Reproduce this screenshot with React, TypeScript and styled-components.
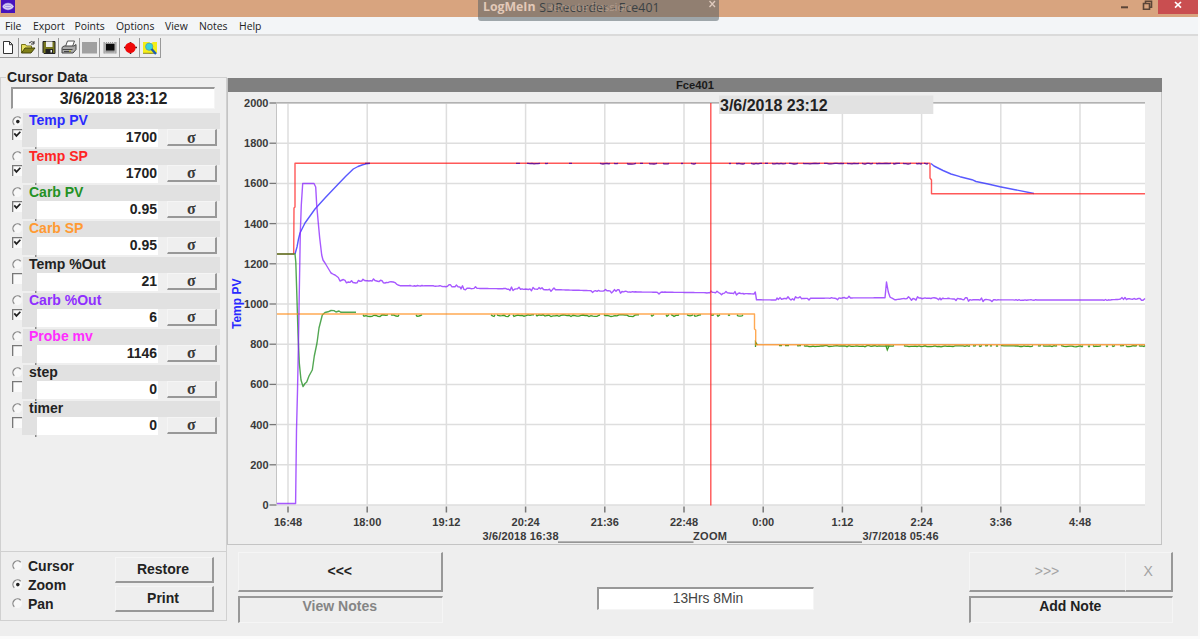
import React from 'react';
import styled, { createGlobalStyle, css } from 'styled-components';

/*
 * Data
 */

interface Channel {
  name: string;
  value: string;
  color: string;
  shown: boolean;
}

const CHANNELS: Channel[] = [
  { name: 'Temp PV', value: '1700', color: '#2a2aff', shown: true },
  { name: 'Temp SP', value: '1700', color: '#ff2424', shown: true },
  { name: 'Carb PV', value: '0.95', color: '#249124', shown: true },
  { name: 'Carb SP', value: '0.95', color: '#ff9a33', shown: true },
  { name: 'Temp %Out', value: '21', color: '#222', shown: false },
  { name: 'Carb %Out', value: '6', color: '#8f2fff', shown: true },
  { name: 'Probe mv', value: '1146', color: '#ff2cff', shown: false },
  { name: 'step', value: '0', color: '#222', shown: false },
  { name: 'timer', value: '0', color: '#222', shown: false },
];

const MENU = [
  { label: 'File', width: 28 },
  { label: 'Export', width: 41.5 },
  { label: 'Points', width: 41.5 },
  { label: 'Options', width: 49 },
  { label: 'View', width: 34 },
  { label: 'Notes', width: 40 },
  { label: 'Help', width: 30 },
];

const TIMES = ['16:48', '18:00', '19:12', '20:24', '21:36', '22:48', '0:00', '1:12', '2:24', '3:36', '4:48'];
const LEVELS = [2000, 1800, 1600, 1400, 1200, 1000, 800, 600, 400, 200, 0];

const PLOT = { left: 276.5, right: 1145, top: 103, bottom: 505 };

const timeX = (i: number) => 288 + i * 79.2;
const levelY = (v: number) => 505 - v * 0.201;

type Point = [number, number];

const TEMP_SP: Point[] = [[277, 254], [293.7, 254], [294, 208], [295, 207], [295, 163.3], [930, 163.3], [930, 178], [931.5, 180], [931.5, 193.8], [1145, 193.8]];

const TEMP_PV_RISE: Point[] = [[295, 254], [297, 247], [298.5, 239], [300, 233], [305, 223], [310, 216], [315, 209], [325, 198], [338.3, 184], [346, 176], [353.3, 169], [358, 166.5], [362, 165], [366, 163.8], [370, 163.4]];

const TEMP_PV_FALL: Point[] = [[931, 163.5], [934, 166], [943, 170.5], [951, 174], [960, 176.7], [972, 179.7], [976, 181.5], [988, 184], [1000, 186.7], [1015, 189.7], [1034, 193.5]];

const CARB_SP: Point[] = [[277, 314], [754.5, 314], [754.5, 329], [755.7, 330], [755.7, 344.8], [1145, 344.8]];

const CARB_PV: Point[] = [[277, 254], [295, 254], [295.8, 262], [297, 300], [298, 333], [299.3, 363], [301, 380], [303, 386.5], [305, 383.5], [306.7, 382], [309, 376], [312.3, 370], [314.3, 356], [317, 343], [319, 328], [322.3, 315], [325, 312.5], [328, 311.8], [331, 310.5], [334, 310.6], [336, 312], [339, 311], [341, 312.3], [356, 312.3]];

const CARB_OUT: Point[] = [[277, 503.5], [295.6, 503.5], [296.5, 430], [297.5, 391], [298.5, 340], [299, 310], [300.3, 233], [301.3, 205], [302.7, 183.5], [314, 183.5], [315.7, 187], [316.7, 205], [318.3, 223], [319.7, 238], [321.7, 255], [323, 260], [325, 263], [328, 268], [331, 273], [335, 275], [338.3, 277.5], [340, 281], [343.3, 279.5], [348.3, 282], [355.7, 283], [361.7, 281], [375, 280.5], [383.3, 282.7], [393.3, 282], [400, 285.7], [433, 285.7], [460, 287], [467, 288.3], [526, 289], [560, 289.8], [603, 291], [637, 292], [710, 292.7], [743, 293.5], [754, 294], [755.3, 292], [756.5, 299.8], [776, 300], [784, 298.5], [842, 298], [885, 297.8], [886.5, 282], [888.3, 292], [890, 297], [895, 299.8], [903, 298.6], [940, 298], [960, 299], [973, 299.8], [1037, 300], [1103, 300], [1145, 298.5]];

// x ranges where the carbon output is noisy
const OUT_NOISE: Point[] = [[343, 375], [380, 398], [410, 424], [433, 476], [503, 556], [590, 637], [655, 665], [706, 748], [776, 812], [830, 850], [903, 975], [980, 998], [1014, 1037], [1103, 1110], [1120, 1145]];

// stretches where the reading drops just under its setpoint
const CARB_DIPS_HIGH: Point[] = [[363, 388], [391, 399], [416, 422], [491, 495], [497, 510], [513, 534], [536, 600], [604, 639], [651, 654], [666, 669], [671, 679], [687, 693], [694, 701], [711, 714], [717, 720], [728, 730], [737, 743]];

const CARB_DIPS_LOW: Point[] = [[779, 782], [785, 789], [797, 801], [804, 894], [904, 970], [973, 976], [979, 982], [985, 988], [990, 992], [996, 998], [1001, 1033], [1038, 1041], [1043, 1057], [1061, 1083], [1088, 1090], [1093, 1101], [1106, 1108], [1112, 1115], [1120, 1124], [1126, 1137], [1139, 1145]];

const TEMP_DIPS: Point[] = [[516, 520], [527, 540], [545, 548], [569, 572], [600, 610], [614, 618], [627, 636], [640, 643], [649, 657], [663, 669], [681, 683], [691, 696], [729, 731], [736, 745], [751, 762], [765, 768], [772, 786], [789, 798], [803, 820], [824, 844], [847, 859], [862, 873], [876, 891], [893, 900], [903, 911], [916, 922], [924, 928]];

/*
 * Path helpers
 */

const wobble = (n: number) => {
  const s = Math.sin(n * 12.9898) * 43758.5453;
  return s - Math.floor(s);
};

const toPoints = (points: Point[]) => points.map(([x, y]) => `${x},${y.toFixed(1)}`).join(' ');

const withNoise = (points: Point[], ranges: Point[]): Point[] => {
  const out: Point[] = [];
  points.forEach(([x, y], i) => {
    out.push([x, y]);
    const next = points[i + 1];
    if (!next || next[0] - x < 4) return;
    for (let px = Math.ceil(x) + 1; px < next[0] - 1; px += 1.5) {
      const base = y + ((next[1] - y) * (px - x)) / (next[0] - x);
      if (!ranges.some(([a, b]) => px >= a && px <= b)) {
        out.push([px, base]);
        continue;
      }
      const r = wobble(px);
      out.push([px, base + (r > 0.9 ? 1.7 : r < 0.12 ? -1.7 : (r - 0.5) * 1.2)]);
    }
  });
  return out;
};

const dips = (ranges: Point[], y: number, depth: number) =>
  ranges.map(([a, b]) => {
    let d = `M${a} ${y}`;
    for (let x = a + 1; x < b; x += 2) {
      d += `L${x} ${(y + wobble(x) * depth).toFixed(1)}`;
    }
    return `${d}L${b} ${y}`;
  }).join('');

/*
 * Components
 */

const Trend: React.FC = () => (
  <TrendSvg viewBox="228 93 933 451">
    <rect x={PLOT.left} y={PLOT.top} width={PLOT.right - PLOT.left} height={PLOT.bottom - PLOT.top} fill="#fff" />

    {LEVELS.map((v) => (
      <g key={v}>
        <line x1={PLOT.left} x2={PLOT.right} y1={levelY(v)} y2={levelY(v)} stroke="#dedede" strokeWidth="1.5" />
        <line x1="269.5" x2="276.5" y1={levelY(v)} y2={levelY(v)} stroke="#777" strokeWidth="1.3" />
        <AxisText x="268.5" y={levelY(v) + 4} textAnchor="end">{v}</AxisText>
      </g>
    ))}
    {TIMES.map((t, i) => (
      <g key={t}>
        <line x1={timeX(i)} x2={timeX(i)} y1={PLOT.top} y2={PLOT.bottom} stroke="#dedede" strokeWidth="1.5" />
        <line x1={timeX(i)} x2={timeX(i)} y1="506.5" y2="512.5" stroke="#777" strokeWidth="1.5" />
        <AxisText x={timeX(i)} y="525.5" textAnchor="middle">{t}</AxisText>
      </g>
    ))}
    <line x1={PLOT.left} x2={PLOT.right} y1="102.7" y2="102.7" stroke="#b2b2b2" strokeWidth="1.5" />
    <line x1={PLOT.left} x2={PLOT.left} y1={PLOT.top} y2={PLOT.bottom} stroke="#c4c4c4" />

    <Trace points={toPoints(TEMP_PV_RISE)} stroke="#2222ff" />
    <Trace points={toPoints(TEMP_PV_FALL)} stroke="#2222ff" />
    <Trace points={toPoints(TEMP_SP)} stroke="#ff2222" />
    <path d={dips(TEMP_DIPS, 163.3, 0.8)} fill="none" stroke="#6a1595" strokeWidth="1.3" />
    <path d="M365 163.4H370" stroke="#6a1595" strokeWidth="1.3" />
    <Trace points={toPoints(CARB_PV)} stroke="#188a18" />
    <path d={dips(CARB_DIPS_HIGH, 314.8, 1.8)} fill="none" stroke="#3f9d2a" strokeWidth="1.3" />
    <path d={dips(CARB_DIPS_LOW, 345.6, 1.2)} fill="none" stroke="#3f9d2a" strokeWidth="1.3" />
    <path d="M755.5 347V342L757.5 345M886 346L887.3 350L889 346" fill="none" stroke="#3f9d2a" strokeWidth="1.3" />
    <Trace points={toPoints(CARB_SP)} stroke="#ff8c1a" />
    <Trace points={toPoints(withNoise(CARB_OUT, OUT_NOISE))} stroke="#8a22ff" />

    <line x1="710.8" x2="710.8" y1="103" y2="505.5" stroke="#ff2a2a" strokeWidth="1.4" opacity="0.8" />
    <rect x="719" y="95.5" width="214.3" height="18.5" fill="#e2e2e2" />
    <CursorText x="720" y="110.7">3/6/2018 23:12</CursorText>

    <ScaleText transform="translate(241 329) rotate(-90)">Temp PV</ScaleText>

    <AxisText x="482.5" y="539.5" textLength="76">3/6/2018 16:38</AxisText>
    <line x1="558" x2="693.5" y1="542.2" y2="542.2" stroke="#777" strokeWidth="1.3" />
    <AxisText x="693" y="539.5" textLength="34">ZOOM</AxisText>
    <line x1="727" x2="862" y1="542.2" y2="542.2" stroke="#777" strokeWidth="1.3" />
    <AxisText x="862.5" y="539.5" textLength="76">3/7/2018 05:46</AxisText>
  </TrendSvg>
);

const ToolIcons: React.ReactNode[] = [
  <path key="new" d="M3.5 3.5h6l3 3v9h-9zM9.5 3.5v3.2h3" fill="#fff" stroke="#333" />,
  <g key="open">
    <path d="M2.5 15V6.5h4l1 1.5h5v2" fill="#e8e060" stroke="#77741a" />
    <path d="M2.5 15L6 10h10l-4 5z" fill="#808018" stroke="#45450d" />
    <path d="M10 5q3-3 5 0m0-2v3h-3" fill="none" stroke="#333" />
  </g>,
  <g key="save">
    <path d="M4 3.5h12v12H5l-1-1z" fill="#767620" stroke="#222" />
    <path d="M7 3.5h6.5v5.5H7z" fill="#eee" />
    <path d="M6.5 11h7.5v4.5H6.5z" fill="#222" />
    <path d="M11.5 12h1.5v2.5h-1.5z" fill="#eee" />
  </g>,
  <g key="print">
    <path d="M6.5 8.5l2-5.5h7l-2 5.5z" fill="#fff" stroke="#555" />
    <path d="M3 9.5l2-1.5h10l2-1.5v5l-3 3.5H3z" fill="#aaa" stroke="#444" />
    <path d="M3.5 11.5h10M5 13.5h7" stroke="#444" />
    <path d="M10 13h2" stroke="#d4d440" />
  </g>,
  <path key="blank" d="M2 4h15v11.5H2z" fill="#a0a0a0" />,
  <g key="chip">
    <path d="M3.5 4h13v11.5h-13z" fill="#999" />
    <path d="M5 4.5h10V15H5z" fill="none" stroke="#e4e4e4" strokeDasharray="1 1" />
    <path d="M6 6h8.5v6.5H6z" fill="#0a0a0a" />
  </g>,
  <g key="record">
    <path d="M4 9.5h13M10.5 4v12" stroke="#4a2020" strokeWidth="1.6" />
    <circle cx="10.3" cy="9.7" r="5.3" fill="#f00808" />
  </g>,
  <g key="search">
    <path d="M3 4h6l2 1.5L13 4h4v11h-4.500l-2 1-2-1H3z" fill="#f4ee18" />
    <path d="M3 15.3h13" stroke="#8a8720" />
    <circle cx="9.200" cy="8.7" r="3.6" fill="#35d4df" stroke="#5aa8ac" />
    <path d="M11.500 11l4.500 5" stroke="#1c5cae" strokeWidth="2.400" />
  </g>,
];

const ChannelRow: React.FC<Channel & { selected: boolean }> = ({ name, value, color, shown, selected }) => (
  <Row>
    <RowHeader>
      <Radio selected={selected} />
      <RowName $color={color}>{name}</RowName>
    </RowHeader>
    <RowBody>
      <Check viewBox="0 0 11 12">
        <rect width="11" height="12" fill="#fafafa" />
        <path d="M.7 12V.7H11" fill="none" stroke="#777" strokeWidth="1.5" />
        {shown && <path d="M2.5 4.7l2.4 2.8L9.2 3" fill="none" stroke="#222" strokeWidth="1.9" />}
      </Check>
      <Gutter />
      <Value>{value}</Value>
      <Sigma>σ</Sigma>
    </RowBody>
  </Row>
);

const Radio: React.FC<{ selected?: boolean }> = ({ selected }) => (
  <RadioSvg viewBox="0 0 11 11">
    <circle cx="5.5" cy="5.5" r="4.5" fill="#f8f8f8" />
    <path d="M2.3 8.7A4.4 4.4 0 0 1 8.7 2.2" fill="none" stroke="#888" strokeWidth="1.3" />
    {selected && <circle cx="5.8" cy="5.6" r="1.8" fill="#222" />}
  </RadioSvg>
);

export default function App() {
  return (
    <Window>
      <GlobalStyle />

      <TitleBar>
        <AppIcon viewBox="0 0 14 13">
          <rect width="14" height="13" fill="#4613bd" />
          <ellipse cx="7" cy="6.5" rx="5.5" ry="3.7" fill="#a79be4" />
          <path d="M2 6.5q5-5 10 0q-5 5-10 0M4 6.5h6" fill="none" stroke="#d9d0f6" strokeWidth="1.1" />
        </AppIcon>
        <WindowTitle>SDRecorder - Fce401</WindowTitle>
        <WindowButtons>
          <svg width="34" height="14" fill="none" stroke="#5b4537">
            <path d="M2 7.3h7" strokeWidth="2" />
            <path d="M24.5 3.5h6v5.7h-6zM26.5 3V1.3h6v6h-1.7" strokeWidth="1.6" />
          </svg>
          <CloseButton>
            <svg width="10" height="10">
              <path d="M2 2l6 5.6M8 2L2 7.6" stroke="#fff" strokeWidth="1.7" />
            </svg>
          </CloseButton>
        </WindowButtons>
        <RemoteBar>
          <b>LogMeIn</b>
          <RemoteCaption>- Remote Session</RemoteCaption>
          <svg width="9" height="9">
            <path d="M1.5 1l5.5 6M7 1L1.5 7" stroke="#dfcabd" strokeWidth="1.3" />
          </svg>
        </RemoteBar>
      </TitleBar>

      <MenuBar>
        {MENU.map(({ label, width }) => (
          <MenuItem key={label} $width={width}>{label}</MenuItem>
        ))}
      </MenuBar>

      <Toolbar>
        {ToolIcons.map((icon, i) => (
          <ToolButton key={i} $first={i === 0}>
            <svg width="19" height="19" viewBox="0 0 19 19" fill="none">{icon}</svg>
          </ToolButton>
        ))}
      </Toolbar>

      <Workspace>
        <Sidebar>
          <CursorGroup>
            <Legend>Cursor Data</Legend>
            <CursorDate>3/6/2018 23:12</CursorDate>
            {CHANNELS.map((channel, i) => (
              <ChannelRow key={channel.name} {...channel} selected={i === 0} />
            ))}
          </CursorGroup>

          <ModeGroup>
            <ModeList>
              <Mode><Radio />Cursor</Mode>
              <Mode><Radio selected />Zoom</Mode>
              <Mode><Radio />Pan</Mode>
            </ModeList>
            <ModeButtons>
              <PushButton>Restore</PushButton>
              <PushButton>Print</PushButton>
            </ModeButtons>
          </ModeGroup>
        </Sidebar>

        <Main>
          <ChartPanel>
            <ChartTitle>Fce401</ChartTitle>
            <Trend />
          </ChartPanel>

          <Footer>
            <FooterColumn>
              <ScrollButton>&lt;&lt;&lt;</ScrollButton>
              <NoteButton $muted>View Notes</NoteButton>
            </FooterColumn>
            <Duration>13Hrs 8Min</Duration>
            <FooterColumn>
              <ScrollPair>
                <ScrollButton $muted $flat>&gt;&gt;&gt;</ScrollButton>
                <ScrollButton $muted>X</ScrollButton>
              </ScrollPair>
              <NoteButton>Add Note</NoteButton>
            </FooterColumn>
          </Footer>
        </Main>
      </Workspace>
    </Window>
  );
}

/*
 * Styles
 */

const GlobalStyle = createGlobalStyle`
  * {
    box-sizing: border-box;
  }

  body {
    margin: 0;
    background: #fbfbfb;
    overflow: hidden;
    font-family: "Liberation Sans", Arial, sans-serif;
    color: #222;
  }

  svg {
    display: block;
    flex: none;
  }

  button {
    font: inherit;
    color: inherit;
    padding: 0;
    border: 0;
    background: none;
  }
`;

const raised = css`
  border-right: 2px solid #989898;
  border-bottom: 2px solid #989898;
  border-top: 1px solid #f5f5f5;
  border-left: 1px solid #f5f5f5;
`;

const sunken = css`
  border-left: 2px solid #989898;
  border-top: 2px solid #989898;
  border-right: 1px solid #f5f5f5;
  border-bottom: 1px solid #f5f5f5;
`;

const Window = styled.div`
  width: 1198px;
  height: 636px;
  display: flex;
  flex-direction: column;
  background: #eee;
`;

const TitleBar = styled.div`
  position: relative;
  height: 17px;
  flex: none;
  display: flex;
  align-items: flex-start;
  justify-content: space-between;
  background: #d8a47f;
`;

const AppIcon = styled.svg`
  width: 14px;
  height: 13px;
  margin-left: 1px;
`;

const WindowTitle = styled.div`
  margin-left: 65px;
  font: 12.3px/15px "Open Sans", "Noto Sans", sans-serif;
  letter-spacing: 0.1px;
  color: #222;
`;

const WindowButtons = styled.div`
  display: flex;
  gap: 5px;
`;

const CloseButton = styled.div`
  width: 40px;
  height: 14px;
  display: flex;
  justify-content: center;
  background: #c94e50;
`;

/* Remote session strip, floats over the title and the menu bar */
const RemoteBar = styled.div`
  position: absolute;
  left: 478px;
  top: 0;
  width: 241px;
  height: 20.5px;
  padding: 0 2px 0 5px;
  display: flex;
  border-radius: 0 0 3px 3px;
  background: rgba(80, 94, 100, 0.52);
  font: 12.3px/14px "Open Sans", "Noto Sans", sans-serif;
  color: #e3c9b8;
  z-index: 1;
`;

const RemoteCaption = styled.span`
  flex: 1;
  padding-left: 4px;
  font-size: 11.5px;
  opacity: 0.4;
`;

const MenuBar = styled.div`
  height: 19px;
  flex: none;
  display: flex;
  padding-left: 5px;
  border-bottom: 2px solid #dadada;
  background: #f3f5f7;
`;

const MenuItem = styled.div<{ $width: number }>`
  width: ${({ $width }) => $width}px;
  font: 10.4px/18px "Open Sans", "Noto Sans", sans-serif;
  color: #222;
`;

const Toolbar = styled.div`
  height: 42px;
  flex: none;
  display: flex;
  align-items: flex-start;
  padding-top: 2px;
`;

const ToolButton = styled.button<{ $first: boolean }>`
  width: ${({ $first }) => ($first ? 18.7 : 20.3)}px;
  height: 20px;
  overflow: hidden;
  border-right: 1.5px solid #999;
  border-bottom: 1.5px solid #999;
`;

const Workspace = styled.div`
  flex: 1;
  display: flex;
`;

const Sidebar = styled.div`
  width: 227px;
  flex: none;
`;

const CursorGroup = styled.div`
  height: 475px;
  margin-top: -1px;
  border: 1px solid #d0d0d0;
  background: #efefef;
`;

const Legend = styled.div`
  width: 84px;
  height: 16px;
  margin: -8px 0 0 5px;
  padding-left: 1px;
  background: #eee;
  font-weight: bold;
  font-size: 14.1px;
  line-height: 15px;
  white-space: nowrap;
`;

const CursorDate = styled.div`
  ${sunken}
  width: 204px;
  height: 22px;
  margin: 1px 0 4px 10px;
  background: #fff;
  font-weight: bold;
  font-size: 16px;
  line-height: 20px;
  text-align: center;
`;

const Row = styled.div`
  height: 35.95px;
  padding-left: 11px;
`;

const RowHeader = styled.div`
  height: 16px;
  display: flex;
  align-items: center;
`;

const RadioSvg = styled.svg`
  width: 11px;
  height: 11px;
`;

const RowName = styled.div<{ $color: string }>`
  width: 197px;
  height: 16px;
  padding-left: 6px;
  background: #e1e1e1;
  color: ${({ $color }) => $color};
  font-weight: bold;
  font-size: 14px;
  line-height: 15px;
`;

const RowBody = styled.div`
  height: 18px;
  display: flex;
`;

const Check = styled.svg`
  width: 10px;
  height: 11px;
`;

const Gutter = styled.div`
  width: 15px;
  height: 20px;
  background: linear-gradient(#e1e1e1, #e1e1e1) 0 0 / 15px 18px no-repeat,
    linear-gradient(#888, #888) 13px 16px / 1.5px 4px no-repeat;
`;

const Value = styled.div`
  width: 121px;
  padding-right: 1px;
  background: #fff;
  font-weight: bold;
  font-size: 14px;
  line-height: 17px;
  text-align: right;
`;

const Sigma = styled.button`
  ${raised}
  width: 49.5px;
  height: 17px;
  margin-left: 9px;
  font: bold 16px/11px "Liberation Serif", serif;
  text-align: center;
  color: #3a3a3a;
`;

const ModeGroup = styled.div`
  height: 69px;
  display: flex;
  justify-content: space-between;
  padding: 4px 12px 0 11px;
  border: 1px solid #d0d0d0;
  border-top: 0;
`;

const ModeList = styled.div`
  display: flex;
  flex-direction: column;
`;

const Mode = styled.div`
  height: 19px;
  display: flex;
  align-items: center;
  gap: 5px;
  font-weight: bold;
  font-size: 14px;
`;

const ModeButtons = styled.div`
  display: flex;
  flex-direction: column;
  gap: 3px;
  padding-top: 1px;
`;

const PushButton = styled.button`
  ${raised}
  width: 99px;
  height: 26px;
  padding-right: 2px;
  font-weight: bold;
  font-size: 14px;
  line-height: 21px;
`;

const Main = styled.div`
  flex: 1;
`;

const ChartPanel = styled.div`
  width: 935px;
  height: 467px;
  border: 1px solid #c4c4c4;
  border-top: 0;
`;

const ChartTitle = styled.div`
  height: 14px;
  margin: 0 -1px 0 0;
  background: #808080;
  font-weight: bold;
  font-size: 11.2px;
  line-height: 15px;
  text-align: center;
  color: #1a1a1a;
`;

const TrendSvg = styled.svg`
  width: 933px;
  height: 451px;
  margin-top: 1px;
`;

const Trace = styled.polyline`
  fill: none;
  stroke-width: 1.4;
  stroke-linejoin: round;
  opacity: 0.75;
`;

const AxisText = styled.text`
  font-weight: bold;
  font-size: 11px;
  fill: #3a3a3a;
`;

const CursorText = styled.text`
  font-weight: bold;
  font-size: 16px;
  fill: #222;
`;

const ScaleText = styled.text`
  font-weight: bold;
  font-size: 12px;
  fill: #2a2aff;
`;

const Footer = styled.div`
  display: flex;
  align-items: flex-start;
  width: 946px;
  padding: 7px 0 0 11px;
  justify-content: space-between;
`;

const FooterColumn = styled.div`
  width: 204.5px;
  display: flex;
  flex-direction: column;
  gap: 4px;
`;

const ScrollPair = styled.div`
  display: grid;
  grid-template-columns: 156px 1fr;
`;

const ScrollButton = styled.button<{ $muted?: boolean; $flat?: boolean }>`
  ${raised}
  height: 40px;
  padding-bottom: 2px;
  font-weight: ${({ $muted }) => ($muted ? 'normal' : 'bold')};
  font-size: 14px;
  color: ${({ $muted }) => ($muted ? '#a3a3a3' : '#222')};
  ${({ $flat }) => $flat && css`border-right: 0;`}
`;

const NoteButton = styled.button<{ $muted?: boolean }>`
  ${sunken}
  height: 27px;
  padding: 0 2px 8px 0;
  font-weight: bold;
  font-size: 14px;
  color: ${({ $muted }) => ($muted ? '#858585' : '#222')};
`;

const Duration = styled.div`
  ${sunken}
  width: 217px;
  height: 23px;
  margin: 35px 0 0 0;
  padding-left: 4px;
  background: #fff;
  font-size: 13.8px;
  line-height: 19px;
  text-align: center;
  color: #444;
`;
